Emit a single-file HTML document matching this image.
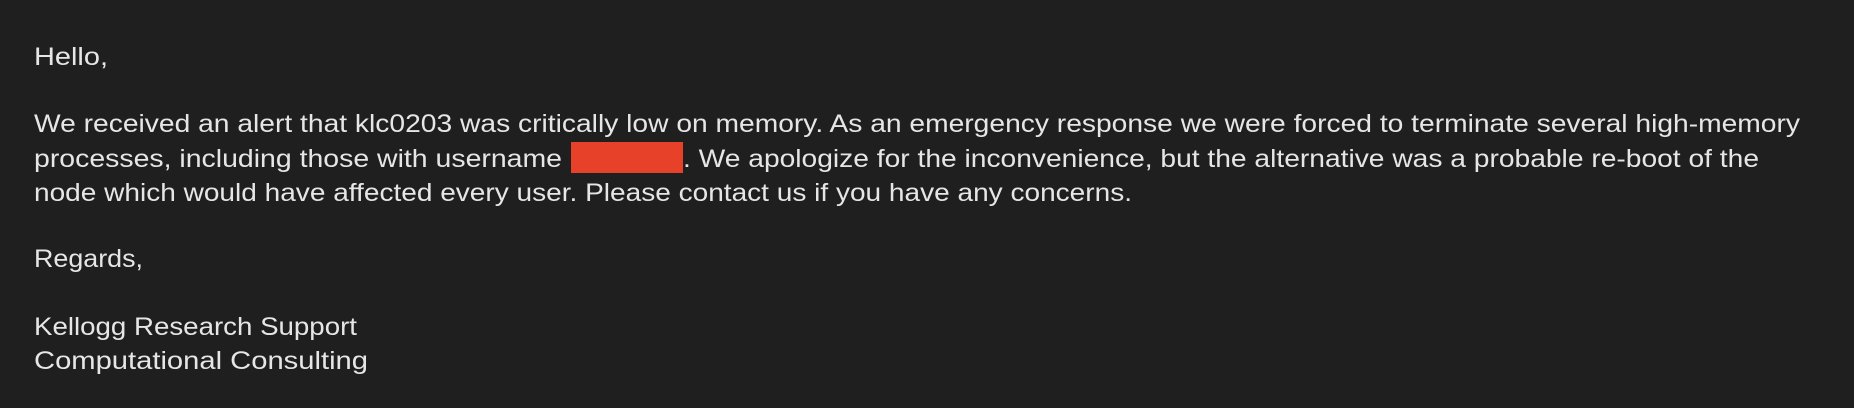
<!DOCTYPE html>
<html><head><meta charset="utf-8"><style>
html,body{margin:0;padding:0;background:#1f1f1f;width:1854px;height:408px;overflow:hidden}
svg{display:block}
text{font-family:"Liberation Sans",sans-serif;font-size:25px;fill:#e6e6e6}
</style></head><body>
<svg width="1854" height="408" xmlns="http://www.w3.org/2000/svg">
<rect width="1854" height="408" fill="#1f1f1f"/>
<text x="34" y="65" textLength="74" lengthAdjust="spacingAndGlyphs">Hello,</text>
<text x="34" y="132" textLength="1766" lengthAdjust="spacingAndGlyphs">We received an alert that klc0203 was critically low on memory. As an emergency response we were forced to terminate several high-memory</text>
<text x="34" y="167" textLength="528" lengthAdjust="spacingAndGlyphs">processes, including those with username</text>
<rect x="571" y="142" width="112" height="31" fill="#e8412a"/>
<text x="683" y="167" textLength="1076" lengthAdjust="spacingAndGlyphs">. We apologize for the inconvenience, but the alternative was a probable re-boot of the</text>
<text x="34" y="201" textLength="1098" lengthAdjust="spacingAndGlyphs">node which would have affected every user. Please contact us if you have any concerns.</text>
<text x="34" y="267" textLength="109" lengthAdjust="spacingAndGlyphs">Regards,</text>
<text x="34" y="335" textLength="323" lengthAdjust="spacingAndGlyphs">Kellogg Research Support</text>
<text x="34" y="369" textLength="334" lengthAdjust="spacingAndGlyphs">Computational Consulting</text>
</svg>
</body></html>
